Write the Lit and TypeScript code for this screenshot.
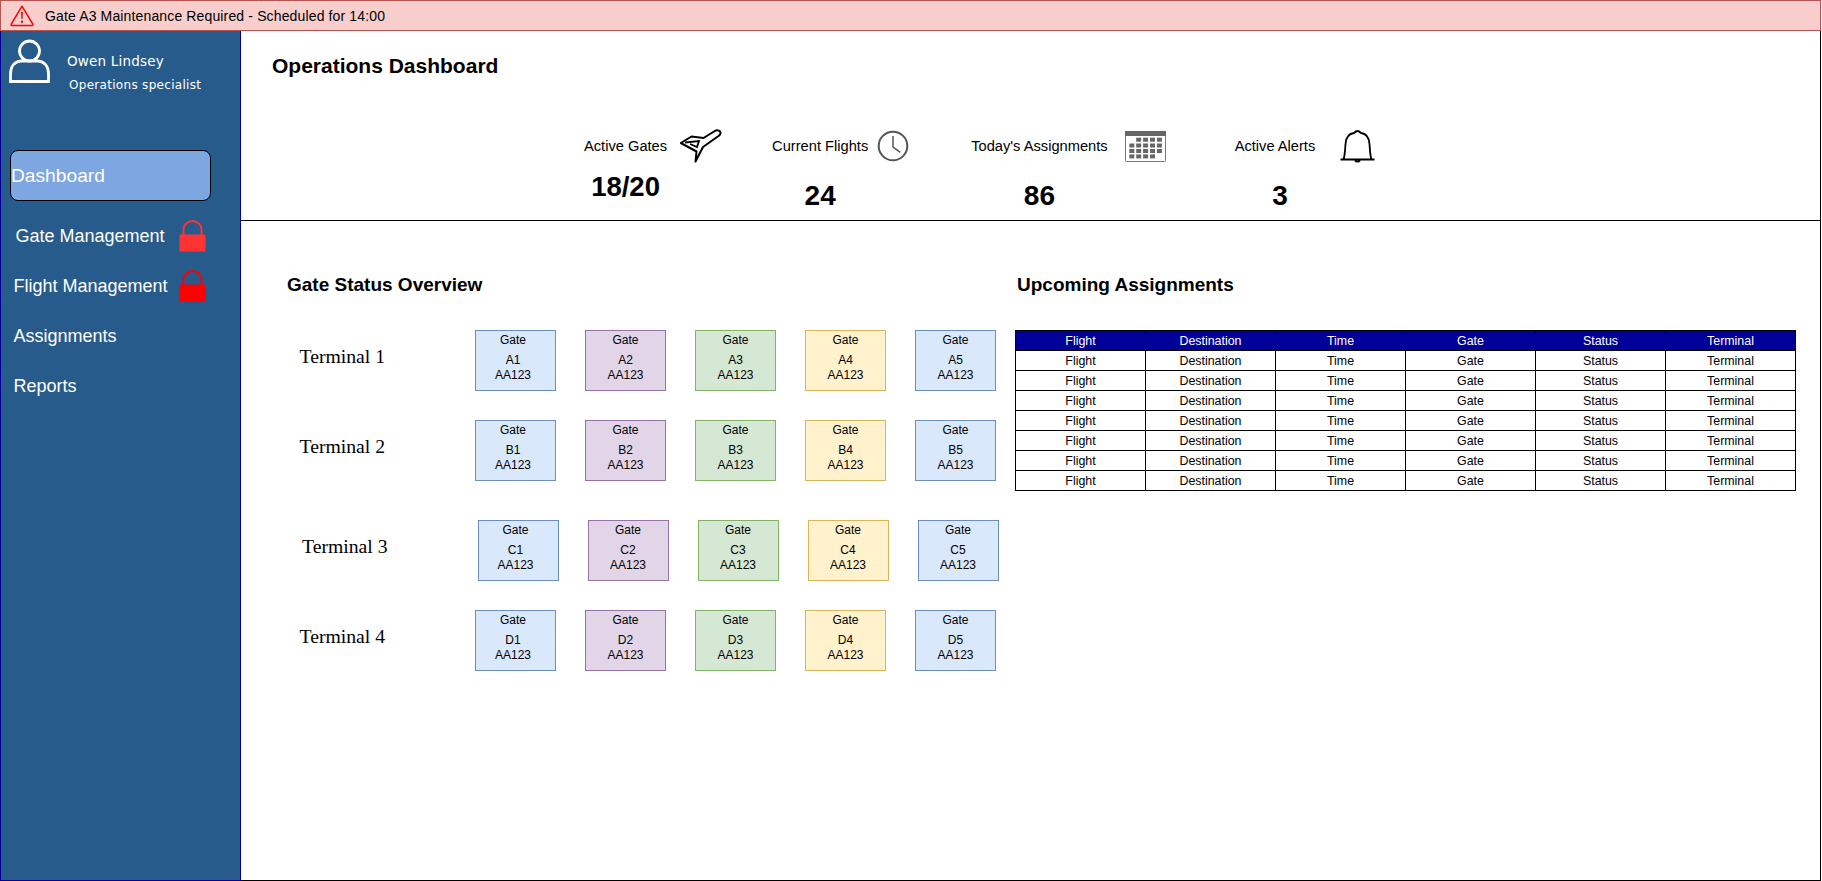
import { LitElement, html, css, svg } from "lit";
import { customElement } from "lit/decorators.js";

const COLS = ["Flight", "Destination", "Time", "Gate", "Status", "Terminal"];
const TERMINALS = [
  { name: "Terminal 1", code: "A", cls: "" },
  { name: "Terminal 2", code: "B", cls: "wide" },
  { name: "Terminal 3", code: "C", cls: "shift" },
  { name: "Terminal 4", code: "D", cls: "" },
];
const TONES = ["blue", "purple", "green", "yellow", "blue"];

const lock = (c: string) => html`<svg class="lock" viewBox="0 0 27 32" width="27" height="32">
  <path d="M4.5 15V9.5a9 8.5 0 0 1 18 0V15" fill="none" stroke=${c} stroke-width="2"/>
  <rect x="0.5" y="14.5" width="26" height="17" fill=${c}/>
</svg>`;

const calCells = () => {
  const xs = [4.3, 11.2, 18.1, 25, 31.9];
  const ys = [6.7, 12.5, 18, 23.4];
  const out = [];
  for (let r = 0; r < 4; r++)
    for (let c = 0; c < 5; c++) {
      if ((r === 0 && c === 0) || (r === 3 && c === 4)) continue;
      out.push(svg`<rect x=${xs[c]} y=${ys[r]} width="5" height="4" fill="#666"/>`);
    }
  return out;
};

@customElement("app-root")
export class AppRoot extends LitElement {
  static styles = css`
    :host {
      display: block;
      width: 1821px;
      height: 881px;
      overflow: hidden;
      font-family: "Liberation Sans", Arial, sans-serif;
      color: #000;
      background: #fff;
    }
    .frame { display: flex; flex-direction: column; height: 100%; }
    .banner {
      box-sizing: border-box;
      height: 31px;
      display: flex;
      align-items: center;
      gap: 11px;
      padding-left: 9px;
      background: #f8cecc;
      border: 1px solid #b85450;
      font-size: 14px;
      letter-spacing: 0.14px;
    }
    .banner svg { display: block; }
    .below { flex: 1; display: flex; min-height: 0; }
    .side {
      box-sizing: border-box;
      flex: 0 0 241px;
      background: #275b8c;
      border: 1px solid #000099;
      border-top: 0;
      color: #fff;
    }
    .user { height: 119px; box-sizing: border-box; display: flex; padding: 8px 0 0 7px; }
    .user-text {
      font-family: "DejaVu Sans", Verdana, sans-serif;
      margin-left: 15px;
      padding-top: 14px;
    }
    .name { font-size: 13.5px; line-height: 16px; letter-spacing: 0.2px; }
    .role { font-size: 12px; line-height: 16px; margin: 8px 0 0 2px; letter-spacing: 0.3px; }
    .current {
      box-sizing: border-box;
      width: 201px;
      height: 51px;
      margin: 0 0 10px 9px;
      display: flex;
      align-items: center;
      background: #7ea6e0;
      border: 1px solid #000;
      border-radius: 8px;
      font-size: 19.2px;
    }
    .item {
      height: 50px;
      display: flex;
      align-items: center;
      padding: 0 34px 0 12.5px;
      font-size: 18px;
    }
    .item.first { padding-left: 14.5px; }
    .lock { margin-left: auto; display: block; }
    .main {
      flex: 1;
      min-width: 0;
      box-sizing: border-box;
      border-right: 1px solid #000;
      border-bottom: 1px solid #000;
      display: flex;
      flex-direction: column;
    }
    .top {
      box-sizing: border-box;
      height: 190px;
      border-bottom: 1px solid #000;
      padding: 23px 0 0 31px;
    }
    h1 { margin: 0; font-size: 21px; line-height: 24px; font-weight: 700; }
    .stats { display: flex; margin: 51px 0 0 312px; }
    .stat {
      display: grid;
      grid-template-columns: max-content max-content;
      grid-template-rows: 34px auto;
      align-items: center;
    }
    .label { font-size: 14.67px; line-height: 16px; }
    .stat svg { display: block; }
    .value {
      grid-column: 1;
      justify-self: center;
      font-size: 28px;
      line-height: 32px;
      font-weight: 700;
      margin-top: 17px;
    }
    .s1 .value { margin-top: -2px; font-size: 27.5px; }
    .s1 svg { margin-left: 13px; }
    .s2 { margin-left: 50px; }
    .s2 svg { margin-left: 9px; }
    .s3 { margin-left: 62px; }
    .s3 svg { margin-left: 17px; }
    .s4 { margin-left: 69px; }
    .s4 svg { margin-left: 25px; }
    .s4 .value { margin-left: 10px; }
    .body { display: flex; padding: 52px 0 0 46px; }
    h2 { margin: 0 0 33px; font-size: 19px; line-height: 24px; font-weight: 700; }
    .left { flex: 0 0 728px; }
    .right h2 { margin-left: 2px; }
    .row { display: flex; height: 61px; margin-bottom: 29px; }
    .row.wide { margin-bottom: 39px; }
    .row.shift { margin-left: 2.5px; }
    .term {
      flex: 0 0 175.5px;
      padding: 15px 0 0 12.5px;
      font-family: "Liberation Serif", "Times New Roman", serif;
      font-size: 19.7px;
      line-height: 23px;
    }
    .gates { display: flex; gap: 29px; }
    .gate {
      box-sizing: border-box;
      width: 81px;
      height: 61px;
      padding-top: 2px;
      border: 1px solid;
      text-align: center;
      font-size: 12px;
      line-height: 15px;
    }
    .gate.lead { padding-right: 5px; }
    .gate .id { margin-top: 5px; }
    .blue { background: #dae8fc; border-color: #6c8ebf; }
    .purple { background: #e1d5e7; border-color: #9673a6; }
    .green { background: #d5e8d4; border-color: #82b366; }
    .yellow { background: #fff2cc; border-color: #d6b656; }
    table {
      border-collapse: collapse;
      table-layout: fixed;
      width: 781px;
      font-size: 12.4px;
    }
    th, td {
      box-sizing: border-box;
      height: 20px;
      padding: 0;
      border: 1px solid #000;
      text-align: center;
      font-weight: 400;
      line-height: 18px;
    }
    th { background: #000099; color: #fff; }
  `;

  render() {
    return html`<div class="frame">
      <div class="banner">
        <svg width="24" height="22" viewBox="0 0 24 22">
          <path d="M12 1.2 1.2 19.2a.8.8 0 0 0 .7 1.2h20.2a.8.8 0 0 0 .7-1.2Z" fill="none" stroke="#f00" stroke-width="1.5" stroke-linejoin="round"/>
          <path d="M11 7h2l-.4 7h-1.2Z" fill="#b22"/>
          <circle cx="12" cy="16.8" r="1.2" fill="#b22"/>
        </svg>
        <span>Gate A3 Maintenance Required - Scheduled for 14:00</span>
      </div>
      <div class="below">
        <nav class="side">
          <div class="user">
            <svg width="44" height="46" viewBox="8 38 44 46">
              <circle cx="29.5" cy="50" r="10" fill="none" stroke="#fff" stroke-width="2.8"/>
              <path d="M10.5 80.5V73C10.5 65 15 60.5 21 60H38C44 60.5 48.5 65 48.5 73V80.5Z" fill="none" stroke="#fff" stroke-width="2.8"/>
            </svg>
            <div class="user-text">
              <div class="name">Owen Lindsey</div>
              <div class="role">Operations specialist</div>
            </div>
          </div>
          <div class="current">Dashboard</div>
          <div class="item first">Gate Management ${lock("#ff3333")}</div>
          <div class="item">Flight Management ${lock("#ff0000")}</div>
          <div class="item">Assignments</div>
          <div class="item">Reports</div>
        </nav>
        <main class="main">
          <header class="top">
            <h1>Operations Dashboard</h1>
            <div class="stats">
              <div class="stat s1">
                <span class="label">Active Gates</span>
                <svg width="42" height="34" viewBox="10 9 42 34">
                  <path d="M50 11.5C48.5 9.8 46 10.2 44 11.5L33.5 18 21.5 16.5 10.8 23 26.5 31.5 25.5 41.5 33 27 48.5 16C50.5 14.5 51 12.8 50 11.5Z" fill="#fff" stroke="#000" stroke-width="2" stroke-linejoin="round"/>
                  <path d="M15 22.5 29 21 27 27 20 24" fill="none" stroke="#000" stroke-width="1.8"/>
                </svg>
                <span class="value">18/20</span>
              </div>
              <div class="stat s2">
                <span class="label">Current Flights</span>
                <svg width="32" height="32" viewBox="0 0 32 32">
                  <circle cx="16" cy="16" r="14.3" fill="none" stroke="#555" stroke-width="2"/>
                  <path d="M16 6V17L23.3 22.3" fill="none" stroke="#555" stroke-width="1.5"/>
                </svg>
                <span class="value">24</span>
              </div>
              <div class="stat s3">
                <span class="label">Today's Assignments</span>
                <svg width="41" height="31" viewBox="0 0 41 31">
                  <rect x="0.5" y="0.5" width="40" height="30" rx="1" fill="#fff" stroke="#777"/>
                  <rect x="0" y="0" width="41" height="5" fill="#666"/>
                  ${calCells()}
                </svg>
                <span class="value">86</span>
              </div>
              <div class="stat s4">
                <span class="label">Active Alerts</span>
                <svg width="35" height="33" viewBox="0 0 35 33">
                  <path d="M0.5 29.5H34.5M3.5 29.5C5 25 5 20 5.5 14 6 7 9 3.5 14 3 15.5 1.5 16.5 1 17.5 1S19.5 1.5 21 3C26 3.5 29 7 29.5 14 30 20 30 25 31.5 29.5M15 30.5C16 32 19 32 20 30.5" fill="none" stroke="#000" stroke-width="1.8"/>
                </svg>
                <span class="value">3</span>
              </div>
            </div>
          </header>
          <section class="body">
            <div class="left">
              <h2>Gate Status Overview</h2>
              ${TERMINALS.map(
                (t) => html`<div class="row ${t.cls}">
                  <div class="term">${t.name}</div>
                  <div class="gates">
                    ${TONES.map(
                      (tone, i) => html`<div class="gate ${tone} ${i === 0 ? "lead" : ""}">
                        <div>Gate</div>
                        <div class="id">${t.code}${i + 1}</div>
                        <div>AA123</div>
                      </div>`
                    )}
                  </div>
                </div>`
              )}
            </div>
            <div class="right">
              <h2>Upcoming Assignments</h2>
              <table>
                <thead><tr>${COLS.map((c) => html`<th>${c}</th>`)}</tr></thead>
                <tbody>
                  ${Array.from({ length: 7 }).map(
                    () => html`<tr>${COLS.map((c) => html`<td>${c}</td>`)}</tr>`
                  )}
                </tbody>
              </table>
            </div>
          </section>
        </main>
      </div>
    </div>`;
  }
}
